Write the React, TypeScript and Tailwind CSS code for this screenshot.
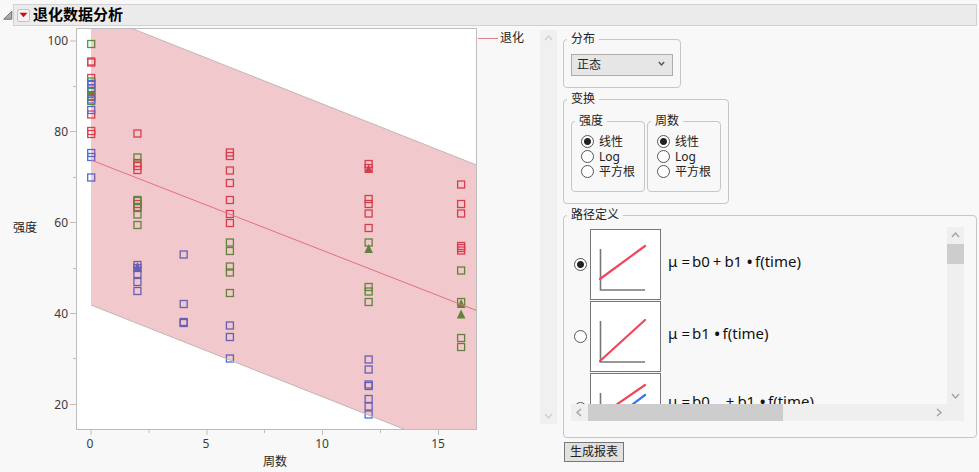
import type { ReactNode } from 'react';

type Series = { weeks: number; color: string; y: number[] };

const RED = '#dc4352';
const GREEN = '#3da03d';
const BLUE = '#4470e0';

const squares: Series[] = [
  { weeks: 0, color: RED, y: [61.5, 62.5, 78, 84, 91, 97, 114.5, 131, 134] },
  { weeks: 0, color: GREEN, y: [44, 81.5, 92, 96, 101] },
  { weeks: 0, color: BLUE, y: [84, 88, 99.5, 110, 153, 157, 177.5] },
  { weeks: 2, color: RED, y: [133.5, 163, 166, 170, 204, 207] },
  { weeks: 2, color: GREEN, y: [157.5, 200, 201, 208, 214.5, 225] },
  { weeks: 2, color: BLUE, y: [265, 268, 274, 282, 291] },
  { weeks: 4, color: BLUE, y: [254.5, 304, 322, 323] },
  { weeks: 6, color: RED, y: [152.5, 156, 170.5, 183, 200, 214, 223] },
  { weeks: 6, color: GREEN, y: [242.5, 251, 266.5, 272.5, 293] },
  { weeks: 6, color: BLUE, y: [325.5, 337, 358.5] },
  { weeks: 12, color: RED, y: [164, 168, 199, 204, 213.5, 228] },
  { weeks: 12, color: GREEN, y: [242.5, 287, 291.5, 302] },
  { weeks: 12, color: BLUE, y: [359.5, 369.5, 384.5, 386, 399, 406.5, 414.5] },
  { weeks: 16, color: RED, y: [184.5, 204, 213.5, 246, 248, 250.5] },
  { weeks: 16, color: GREEN, y: [270.5, 302, 338, 347] },
];

const triangles: Series[] = [
  { weeks: 2, color: BLUE, y: [267] },
  { weeks: 12, color: RED, y: [169] },
  { weeks: 12, color: GREEN, y: [249] },
  { weeks: 16, color: GREEN, y: [304, 314.5] },
];

const yTicks = [
  { label: '100', y: 41 },
  { label: '80', y: 131.5 },
  { label: '60', y: 222.5 },
  { label: '40', y: 313.5 },
  { label: '20', y: 404.5 },
];

const xTicks = [
  { label: '0', x: 91 },
  { label: '5', x: 207 },
  { label: '10', x: 322.5 },
  { label: '15', x: 438.5 },
];

const scaleX = (weeks: number) => 91.2 + weeks * 23.12;

const Chart = () => (
  <svg width="478" height="444" viewBox="0 28 478 444" className="shrink-0 text-xs" role="img" aria-label="退化数据分析">
    <rect x="76.5" y="28.5" width="400" height="401" fill="#fff" />
    {squares.map((s, i) =>
      s.y.map((y, j) => (
        <rect key={`${i}-${j}`} x={scaleX(s.weeks) - 3.5} y={y - 3.5} width="7" height="7" fill="none" stroke={s.color} strokeWidth="1.3" />
      ))
    )}
    {triangles.map((s, i) =>
      s.y.map((y, j) => (
        <path key={`${i}-${j}`} d={`M${scaleX(s.weeks)} ${y - 5}l4.3 9h-8.6z`} fill={s.color} />
      ))
    )}
    <path d="M91 28.5H132L476.5 165V429.5H405L91 305Z" fill="#cb3342" fillOpacity="0.27" />
    <path d="M132 28.5L476.5 165M91 305L405 429.5" stroke="#c4b4b6" fill="none" />
    <path d="M91 160L476.5 310.5" stroke="#e2707c" fill="none" />
    <rect x="76.5" y="28.5" width="400" height="401" fill="none" stroke="#bdbdbd" />
    <path d="M73 86.5h3M73 177.5h3M73 268.5h3M73 358.5h3M149 430v3M264.5 430v3M380.5 430v3" stroke="#bdbdbd" />
    {yTicks.map((t) => (
      <g key={t.label}>
        <path d={`M70 ${t.y}h6`} stroke="#bdbdbd" />
        <text x="68" y={Math.round(t.y) + 4} textAnchor="end" fill="#3c3c3c">{t.label}</text>
      </g>
    ))}
    {xTicks.map((t) => (
      <g key={t.label}>
        <path d={`M${t.x} 430v5`} stroke="#bdbdbd" />
        <text x={Math.round(t.x) - 1} y="448" textAnchor="middle" fill="#3c3c3c">{t.label}</text>
      </g>
    ))}
    <text x="13" y="232" fill="#222">强度</text>
    <text x="263" y="466" fill="#222">周数</text>
  </svg>
);

const Group = ({ title, className = '', children }: { title: string; className?: string; children: ReactNode }) => (
  <fieldset className={`min-w-0 rounded border border-[#c6c6c6] px-[7px] ${className}`}>
    <legend className="-ml-1 px-1 leading-[18px]">{title}</legend>
    {children}
  </fieldset>
);

const radioClass =
  'size-[13px] shrink-0 appearance-none rounded-full border border-[#555] bg-white checked:bg-[radial-gradient(circle,#222_3px,#fff_4px)]';

const RadioGroup = ({ title, name }: { title: string; name: string }) => (
  <Group title={title} className="w-[74px] pb-3">
    <div className="mt-1 ml-0.5">
      {['线性', 'Log', '平方根'].map((option, i) => (
        <label key={option} className="flex h-[15px] items-center gap-[5px] leading-[15px] whitespace-nowrap">
          <input type="radio" name={name} defaultChecked={i === 0} className={radioClass} />
          {option}
        </label>
      ))}
    </div>
  </Group>
);

const arrows = {
  up: 'M1 6l3.5-4L8 6',
  down: 'M1 3l3.5 4L8 3',
  left: 'M6 1L2 4.5 6 8',
  right: 'M3 1l4 3.5L3 8',
};

const ArrowButton = ({ direction, label, color = '#a3a3a3' }: { direction: keyof typeof arrows; label: string; color?: string }) => (
  <button type="button" aria-label={label} className="flex size-[17px] shrink-0 items-center justify-center">
    <svg width="9" height="9" viewBox="0 0 9 9" fill="none" stroke={color} strokeWidth="1.4">
      <path d={arrows[direction]} />
    </svg>
  </button>
);

const paths = [
  {
    id: 'intercept',
    lines: [{ d: 'M10 50L55 17', color: '#f0475a' }],
    formula: ['b0', '+', 'b1'],
  },
  {
    id: 'origin',
    lines: [{ d: 'M10 60L55 19', color: '#f0475a' }],
    formula: ['b1'],
  },
  {
    id: 'group',
    lines: [
      { d: 'M10 43L55 12', color: '#f0475a' },
      { d: 'M10 56L55 22', color: '#3f73f5' },
    ],
    formula: ['b0', '+', 'b1'],
  },
];

const Formula = ({ parts, grouped }: { parts: string[]; grouped: boolean }) => (
  <span className={`flex items-center whitespace-nowrap text-[15px] leading-5 text-[#111] ${grouped ? 'mb-4' : 'mb-2'}`}>
    <span>μ</span>
    <span className="ml-1 mr-0.5">=</span>
    {parts.map((part) =>
      part === '+' ? (
        <span key={part} className={grouped ? 'ml-4 mr-[3px]' : 'ml-[3px] mr-[3px]'}>+</span>
      ) : (
        <span key={part}>{part}</span>
      )
    )}
    <span className="ml-1 mr-0.5 text-lg leading-5">•</span>
    <span>f(time)</span>
  </span>
);

const PathDefinition = () => (
  <Group title="路径定义" className="pb-4 pr-3">
    <div className="mt-[3px] flex">
      <div className="flex h-[177px] min-w-0 flex-1 flex-col gap-px overflow-hidden pt-0.5 pl-[3px]">
        {paths.map((path, i) => (
          <label key={path.id} className="flex shrink-0 items-center">
            <input type="radio" name="path" defaultChecked={i === 0} className={radioClass} />
            <svg width="71" height="71" viewBox="0 0 71 71" fill="none" className="mr-[7px] ml-[3px]">
              <rect x="0.5" y="0.5" width="70" height="70" fill="#fff" stroke="#777" />
              <path d="M10.5 20V61H55" stroke="#777" strokeWidth="1.6" />
              {path.lines.map((line) => (
                <path key={line.color} d={line.d} stroke={line.color} strokeWidth="2.2" strokeLinecap="round" />
              ))}
            </svg>
            <Formula parts={path.formula} grouped={path.id === 'group'} />
          </label>
        ))}
      </div>
      <div className="flex w-[17px] flex-col bg-[#efefef]">
        <ArrowButton direction="up" label="向上滚动" />
        <div className="h-5 bg-[#cdcdcd]" />
        <div className="flex-1" />
        <ArrowButton direction="down" label="向下滚动" />
      </div>
    </div>
    <div className="flex bg-[#efefef] pr-[17px]">
      <ArrowButton direction="left" label="向左滚动" />
      <div className="flex-1">
        <div className="h-full w-[57%] bg-[#cdcdcd]" />
      </div>
      <ArrowButton direction="right" label="向右滚动" />
    </div>
  </Group>
);

export default function App() {
  return (
    <div className="min-h-screen bg-[#f8f8f8] font-['Noto_Sans','Noto_Sans_CJK_SC',sans-serif] text-xs text-[#222]">
      <header className="flex items-start pt-1 pr-0.5 pl-[3px]">
        <svg width="10" height="10" viewBox="0 0 10 10" className="mt-1.5">
          <path d="M0.7 9.2H8.8V1.2Z" fill="#aaa" stroke="#666" strokeWidth="0.9" />
        </svg>
        <div className="flex h-[22px] flex-1 items-center border border-[#d2d2d2] bg-[#ebebeb] pl-[3px]">
          <button type="button" aria-label="选项" className="flex size-[13px] items-center justify-center rounded-xs border border-[#c3c3c3] bg-[#f3f3f3]">
            <svg width="9" height="6" viewBox="0 0 9 6">
              <path d="M0.5 0.8H8.5L4.5 5.2Z" fill="#d01010" />
            </svg>
          </button>
          <h1 className="ml-[3px] pb-0.5 text-[15px] leading-[18px] font-bold text-black">退化数据分析</h1>
        </div>
      </header>
      <main className="flex items-start pt-0.5 pr-0.5">
        <Chart />
        <div className="flex w-[62px] shrink-0 items-center gap-0.5 pt-px">
          <span className="h-px w-5 bg-[#e2808a]" />
          <span className="leading-[18px]">退化</span>
        </div>
        <div className="mt-0.5 flex h-[394px] w-[17px] shrink-0 flex-col justify-between bg-[#f0f0f0]">
          <ArrowButton direction="up" label="向上滚动" color="#cfcfcf" />
          <ArrowButton direction="down" label="向下滚动" color="#cfcfcf" />
        </div>
        <div className="ml-1.5 flex min-w-0 flex-1 flex-col gap-0.5 pt-0.5">
          <Group title="分布" className="self-start pb-[11px]">
            <div className="relative mt-1.5">
              <select aria-label="分布" className="h-[22px] w-[102px] appearance-none border border-[#adadad] bg-[#e6e6e6] pl-[5px]">
                <option>正态</option>
              </select>
              <svg width="7" height="6" viewBox="0 0 7 6" className="pointer-events-none absolute top-[7px] right-2" fill="none" stroke="#555" strokeWidth="1.4">
                <path d="M0.8 1L3.5 4 6.2 1" />
              </svg>
            </div>
          </Group>
          <Group title="变换" className="self-start pb-[11px]">
            <div className="mt-1 flex gap-0.5">
              <RadioGroup title="强度" name="strength" />
              <RadioGroup title="周数" name="weeks" />
            </div>
          </Group>
          <PathDefinition />
          <button type="button" className="mt-0.5 ml-px h-5 w-[60px] self-start border border-[#777] bg-[#e1e1e1] leading-4">
            生成报表
          </button>
        </div>
      </main>
    </div>
  );
}
